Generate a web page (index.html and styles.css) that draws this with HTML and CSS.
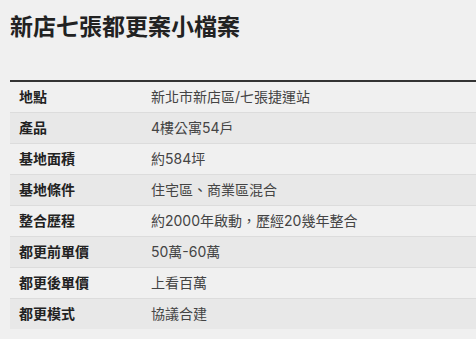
FILE: index.html
```html
<!DOCTYPE html>
<html lang="zh-Hant">
<head>
<meta charset="utf-8">
<title>新店七張都更案小檔案</title>
<link rel="stylesheet" href="styles.css">
</head>
<body>
<div class="page">
  <h1 class="title">新店七張都更案小檔案</h1>
  <table class="info">
    <tbody>
      <tr><th>地點</th><td>新北市新店區/七張捷運站</td></tr>
      <tr><th>產品</th><td>4樓公寓54戶</td></tr>
      <tr><th>基地面積</th><td>約584坪</td></tr>
      <tr><th>基地條件</th><td>住宅區、商業區混合</td></tr>
      <tr><th>整合歷程</th><td>約2000年啟動，歷經20幾年整合</td></tr>
      <tr><th>都更前單價</th><td>50萬-60萬</td></tr>
      <tr><th>都更後單價</th><td>上看百萬</td></tr>
      <tr><th>都更模式</th><td>協議合建</td></tr>
    </tbody>
  </table>
</div>
</body>
</html>
```

FILE: styles.css
```css
html, body {
  margin: 0;
  padding: 0;
  background: #f0f0f0;
}
body {
  font-family: Inter, "Noto Sans CJK TC", sans-serif;
  color: #222;
}
.page {
  padding: 0 0 0 10px;
}
.title {
  margin: 0;
  padding-top: 12px;
  font-size: 23px;
  line-height: 30px;
  font-weight: 700;
  color: #222;
}
.info {
  margin-top: 38px;
  width: 100%;
  table-layout: fixed;
  border-collapse: collapse;
  border-top: 2px solid #333;
}
.info th,
.info td {
  height: 30px;
  padding: 0 9px;
  font-size: 14px;
  line-height: 20px;
  text-align: left;
  border-bottom: 1px solid #dcdcdc;
}
.info tr:last-child th,
.info tr:last-child td {
  border-bottom: none;
}
.info th {
  width: 114px;
  font-weight: 700;
  color: #222;
}
.info td {
  font-weight: 400;
  color: #444;
}
.info tr:nth-child(even) {
  background: #e8e8e8;
}
```
